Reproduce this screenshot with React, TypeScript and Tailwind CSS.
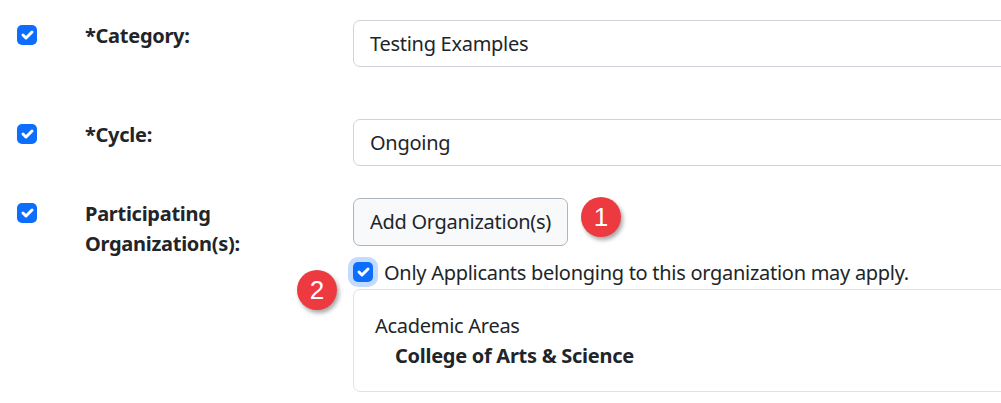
import type { ReactNode } from 'react';

const FONT = { fontFamily: '"Noto Sans", "Open Sans", sans-serif', letterSpacing: '-0.28px' };

function Check({ focus = false }: { focus?: boolean }) {
  return (
    <span
      className={`flex h-[20px] w-[20px] shrink-0 items-center justify-center rounded-[5px] bg-[#0d6efd] ${
        focus ? 'shadow-[0_0_0_5px_rgba(13,110,253,0.25)]' : ''
      }`}
    >
      <svg viewBox="0 0 20 20" className="h-[20px] w-[20px]">
        <path d="m6 10 3 3 6-6" fill="none" stroke="#fff" strokeWidth="3" strokeLinecap="round" strokeLinejoin="round" />
      </svg>
    </span>
  );
}

function Badge({ n, className }: { n: string; className: string }) {
  return (
    <span
      className={`absolute flex h-[40px] w-[40px] items-center justify-center rounded-full bg-[#ec3a40] text-[26px] leading-none text-white shadow-[2px_3px_4px_rgba(0,0,0,0.35)] ${className}`}
      style={{ fontFamily: '"Liberation Sans", Arial, sans-serif', letterSpacing: 0 }}
    >
      {n}
    </span>
  );
}

function Row({ label, children, className = '' }: { label: ReactNode; children: ReactNode; className?: string }) {
  return (
    <div className={`flex ${className}`}>
      <div className="w-[20px] shrink-0 pt-[5px]">
        <Check />
      </div>
      <div className="ml-[48px] w-[268px] shrink-0 pt-px font-bold">{label}</div>
      <div className="min-w-0 flex-1">{children}</div>
    </div>
  );
}

function TextBox({ value }: { value: string }) {
  return (
    <div className="h-[47px] rounded-[7px] border border-[#ced4da] bg-white px-[16px] pt-[8px] text-[#212529]">
      {value}
    </div>
  );
}

export default function App() {
  return (
    <div className="relative h-[403px] w-[1001px] overflow-hidden bg-white text-[20px] leading-[30px] text-[#212529]" style={FONT}>
      <div className="w-[1100px] pl-[17px] pt-[20px]">
        <Row label="*Category:">
          <TextBox value="Testing Examples" />
        </Row>
        <Row label="*Cycle:" className="mt-[52px]">
          <TextBox value="Ongoing" />
        </Row>
        <Row
          className="mt-[32px]"
          label={
            <>
              Participating
              <br />
              Organization(s):
            </>
          }
        >
          <button className="h-[48px] rounded-[7px] border border-[#adb5bd] bg-[#f8f9fa] px-[16px] text-[#212529]">
            Add Organization(s)
          </button>
          <label className="mt-[11px] flex items-start">
            <span className="pt-[5px]">
              <Check focus />
            </span>
            <span className="ml-[11px] pt-px">Only Applicants belonging to this organization may apply.</span>
          </label>
          <div className="mt-px rounded-[7px] border border-[#dee2e6] bg-white px-[21px] pb-[20px] pt-[21px]">
            <div>Academic Areas</div>
            <div className="pl-[20px] font-bold">College of Arts &amp; Science</div>
          </div>
        </Row>
      </div>
      <Badge n="1" className="left-[581px] top-[197px]" />
      <Badge n="2" className="left-[297px] top-[270px]" />
    </div>
  );
}
